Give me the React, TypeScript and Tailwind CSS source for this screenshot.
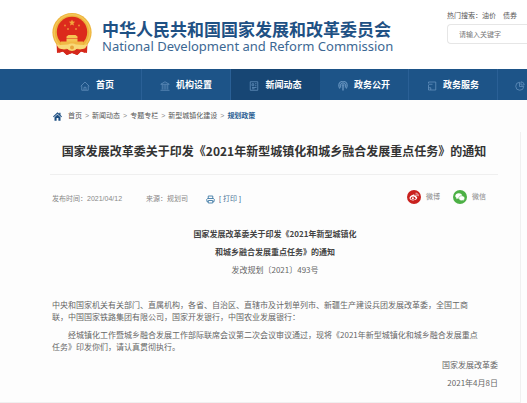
import type { ReactNode } from "react";

function Emblem() {
  return (
    <svg viewBox="0 0 40 44" className="h-11 w-10 shrink-0" aria-hidden="true">
      <path d="M4.500 29 L5 40 L11 38.500 L15 42 L20 40 L25 42 L29 38.500 L35 40 L35.500 29 Z" fill="#d5281b" />
      <circle cx="20" cy="19.6" r="19.6" fill="#edb43c" />
      <circle cx="20" cy="19.6" r="17.800" fill="none" stroke="#f4c658" strokeWidth="1.400" />
      <circle cx="20" cy="19" r="15.2" fill="#dc2a1c" />
      <path d="M20 6.500l.9 2.100 2.300.2-1.800 1.500.6 2.300-2-1.200-2 1.200.6-2.300-1.800-1.500 2.300-.2z" fill="#f2a53c" />
      <g fill="#ee8b35">
        <circle cx="13" cy="12.500" r="1" />
        <circle cx="27" cy="12.500" r="1" />
        <circle cx="16" cy="16" r="1" />
        <circle cx="24" cy="16" r="1" />
      </g>
      <path d="M14.500 23.500l2-1.500h7l2 1.500v2h-11zM14.500 26h11v3h-11z" fill="#f5c553" />
      <path d="M9 28.500h22v3.500H9z" fill="#f1b945" />
      <path d="M4 31c4 2 8 .500 12 .500 1.500-1.500 6.500-1.500 8 0 4 0 8 1.500 12-.500l-3 4.500c-3 1-5 .500-7.500 0-2 3-9 3-11 0-2.500.500-4.500 1-7.500 0z" fill="#f8d978" />
      <path d="M7.500 35.500c4 1.500 6 1 8 .500 2 2.500 7 2.500 9 0 2 .500 4 1 8-.500l1 4.500-4.500-1.500-3.500 3.500-5.500-2-5.500 2-3.500-3.500L6.500 40z" fill="#d5281b" />
      <circle cx="20" cy="34.500" r="2" fill="#e8a53a" />
    </svg>
  );
}

function NavIcon({ children }: { children: ReactNode }) {
  return (
    <svg
      viewBox="0 0 20 20"
      className="h-2.5 w-2.5 shrink-0 text-[#6391bd]"
      fill="none"
      stroke="currentColor"
      strokeWidth="1.600"
      aria-hidden="true"
    >
      {children}
    </svg>
  );
}

const NAV = [
  {
    label: "首页",
    icon: <path d="M1.500 10.500 10 2l8.500 8.500M3.500 9v9.500h13V9M8 18v-5.500h4V18" />,
  },
  {
    label: "机构设置",
    icon: <path d="M1.500 6.500 10 1.500l8.500 5zM4.500 7v10M8.200 7v10M11.800 7v10M15.500 7v10M1 18.500h18" />,
  },
  {
    label: "新闻动态",
    active: true,
    icon: <path d="M2.500 1.500h15v17h-15zM6 5.500h3.500v4H6zM12 5.500h3M12 9.500h3M6 13h9M6 15.500h5" />,
  },
  {
    label: "政务公开",
    icon: (
      <>
        <path d="M4 15a8.500 8.500 0 1 1 12 0M6.300 13a5.200 5.200 0 1 1 7.400 0" strokeWidth="2.200" />
        <circle cx="10" cy="9" r="2" fill="currentColor" />
        <path d="M10 11v8" strokeWidth="3" />
      </>
    ),
  },
  {
    label: "政务服务",
    icon: <path d="M3 5V2h14.500v16H3V8M3 6.500h8M3 13.500h4.500V18" />,
  },
];

const CRUMBS = ["首页", "新闻动态", "专题专栏", "新型城镇化建设"];

function Header() {
  return (
    <header className="flex h-[69px] items-start justify-between overflow-hidden bg-white">
      <a href="#" className="flex shrink-0 items-center gap-2.5 pt-[13px] pl-[52px]">
        <Emblem />
        <span className="flex flex-col pt-[3px] text-[#1f5184]">
          <span className="text-[17px] leading-[18px] font-bold whitespace-nowrap">
            中华人民共和国国家发展和改革委员会
          </span>
          <span className="font-['Noto_Sans',sans-serif] text-[13px] leading-3 whitespace-nowrap text-[#3c6893]">
            National Development and Reform Commission
          </span>
        </span>
      </a>
      <div className="w-20 shrink-0 pt-[11px] text-[7px] text-[#555]">
        <p className="flex gap-[7px] leading-[10px] whitespace-nowrap">
          <span>
            热门搜索：<a href="#">油价</a>
          </span>
          <a href="#">债券</a>
        </p>
        <input
          type="search"
          aria-label="请输入关键字"
          placeholder="请输入关键字"
          className="mt-[3px] block h-5 w-full rounded-l-sm border border-r-0 border-[#e6e6e6] bg-white pl-[11px] placeholder:text-[#777]"
        />
      </div>
    </header>
  );
}

function Nav() {
  return (
    <nav className="flex h-[31px] overflow-hidden bg-[#1d5488] pl-[53px]">
      {NAV.map((item) => (
        <a
          key={item.label}
          href="#"
          className={
            item.active
              ? "flex w-[89px] shrink-0 items-center justify-center gap-1.5 bg-[#174674] pt-0.5 text-[9px] font-bold text-white"
              : "flex w-[89px] shrink-0 items-center justify-center gap-1.5 border-r border-[#2a6096] pt-0.5 text-[9px] font-bold text-white"
          }
        >
          <NavIcon>{item.icon}</NavIcon>
          {item.label}
        </a>
      ))}
      <a href="#" aria-label="互动交流" className="flex shrink-0 items-center pt-0.5 pl-[17px]">
        <NavIcon>
          <path d="M9 2.500a8 8 0 1 0 8.500 8.500H9zM12 1.500a7 7 0 0 1 6.500 6.500H12z" />
        </NavIcon>
      </a>
    </nav>
  );
}

function Breadcrumb() {
  return (
    <nav className="flex h-8 items-center gap-1.5 pl-[53px] text-[7px] whitespace-nowrap text-[#555]">
      <svg viewBox="0 0 18 18" className="h-[9px] w-[9px] shrink-0" fill="#1d4f82" aria-hidden="true">
        <path d="M9 .500 0 9l1.500 1.500L9 3.500l7.500 7L18 9l-3-2.900V1.500h-2.500v2.200z" />
        <path d="M3 10.500 9 5l6 5.500V17.500h-4.200V12H7.200v5.500H3z" />
      </svg>
      <span className="flex gap-[3px]">
        {CRUMBS.map((c) => (
          <span key={c} className="flex gap-[3px]">
            <a href="#">{c}</a>
            <span className="text-[#888]">&gt;</span>
          </span>
        ))}
        <a href="#" className="font-bold text-[#2b5f93]">
          规划政策
        </a>
      </span>
    </nav>
  );
}

function Meta() {
  return (
    <div className="flex items-center justify-between pt-[15px] pr-3 pl-[2px] text-[7px] whitespace-nowrap text-[#888]">
      <div className="flex items-center pt-1">
        <span>发布时间：2021/04/12</span>
        <span className="ml-6">来源：规划司</span>
        <button type="button" className="ml-[18px] flex items-center gap-1 text-[#4a7397]">
          <svg viewBox="0 0 18 18" className="h-[9px] w-[9px]" fill="none" stroke="#3f7ba6" strokeWidth="1.800" aria-hidden="true">
            <path d="M4.500 7V2h9v5M4.500 13.500H2L1.500 8.500 3 7h12l1.500 1.500-.5 5h-2.500M4.500 11h9v5h-9z" />
          </svg>
          [ 打印 ]
        </button>
      </div>
      <div className="flex items-center gap-[13px]">
        <a href="#" className="flex items-center gap-[5px]">
          <svg viewBox="0 0 28 28" className="h-3.5 w-3.5" aria-hidden="true">
            <circle cx="14" cy="14" r="14" fill="#c9211e" />
            <path
              d="M12 9.500c2-.8 3.500-.2 3 1.900 2.500-.8 4-.1 3.300 1.800 1.700.5 2.400 1.500 2.100 3-.6 2.600-4 4.600-8 4.600-4.300 0-7.400-2-7.400-4.700 0-2.400 3.500-5.700 7-6.600z"
              fill="#fff"
            />
            <ellipse cx="12.300" cy="16.300" rx="4.700" ry="3.200" fill="#c9211e" />
            <circle cx="11.800" cy="16.500" r="2" fill="#fff" />
            <path d="M17 6.500c3.800-.6 6.300 2.300 5.300 6M17.300 9.300c1.800-.2 2.900 1 2.400 2.600" fill="none" stroke="#fff" strokeWidth="1.400" />
          </svg>
          微博
        </a>
        <a href="#" className="flex items-center gap-[5px]">
          <svg viewBox="0 0 28 28" className="h-3.5 w-3.5" aria-hidden="true">
            <circle cx="14" cy="14" r="14" fill="#4cb045" />
            <path d="M11.500 6.500c4 0 7 2.500 7 5.500s-3 5.500-7 5.500c-.8 0-1.600-.1-2.300-.3L6.500 18.500l.7-2.500C5.500 15 4.500 13.600 4.500 12c0-3 3-5.500 7-5.500z" fill="#fff" />
            <path
              d="M17.500 11.500c3.400 0 6 2.200 6 4.900 0 1.400-.8 2.700-2 3.600l.5 2.200-2.300-1.200c-.7.200-1.400.3-2.200.3-3.300 0-6-2.200-6-4.900s2.700-4.900 6-4.900z"
              fill="#fff"
              stroke="#4cb045"
              strokeWidth="1"
            />
          </svg>
          微信
        </a>
      </div>
    </div>
  );
}

function Article() {
  return (
    <article className="pl-[2px] font-['Noto_Sans_CJK_SC',sans-serif] text-[8px] text-[#666]">
      <div className="pt-5 text-center leading-[18px]">
        <h2 className="font-bold text-[#444]">
          国家发展改革委关于印发《2021年新型城镇化
          <br />
          和城乡融合发展重点任务》的通知
        </h2>
        <p>发改规划〔2021〕493号</p>
      </div>
      <div className="flex flex-col gap-1.5 pt-5 leading-3 whitespace-nowrap">
        <p>
          中央和国家机关有关部门、直属机构，各省、自治区、直辖市及计划单列市、新疆生产建设兵团发展改革委，全国工商
          <br />
          联，中国国家铁路集团有限公司，国家开发银行，中国农业发展银行：
        </p>
        <p className="indent-4">
          经城镇化工作暨城乡融合发展工作部际联席会议第二次会议审议通过，现将《2021年新型城镇化和城乡融合发展重点
          <br />
          任务》印发你们，请认真贯彻执行。
        </p>
      </div>
      <div className="pt-[3px] pb-2.5 text-right leading-[18px]">
        <p>国家发展改革委</p>
        <p>2021年4月8日</p>
      </div>
    </article>
  );
}

export default function App() {
  return (
    <div
      lang="zh-CN"
      className="w-full overflow-hidden bg-[#fdfdfd] font-['Liberation_Sans','Noto_Sans_CJK_SC',sans-serif]"
    >
      <Header />
      <Nav />
      <Breadcrumb />
      <main className="mr-1.5 border-r border-b border-[#f0f0f0] pr-[22px] pl-[50px]">
        <h1 className="border-b border-[#efefef] pt-[9px] pb-[13px] text-center font-['Noto_Sans_CJK_SC',sans-serif] text-[12px] leading-5 font-bold whitespace-nowrap text-[#333]">
          国家发展改革委关于印发《2021年新型城镇化和城乡融合发展重点任务》的通知
        </h1>
        <Meta />
        <Article />
      </main>
    </div>
  );
}
